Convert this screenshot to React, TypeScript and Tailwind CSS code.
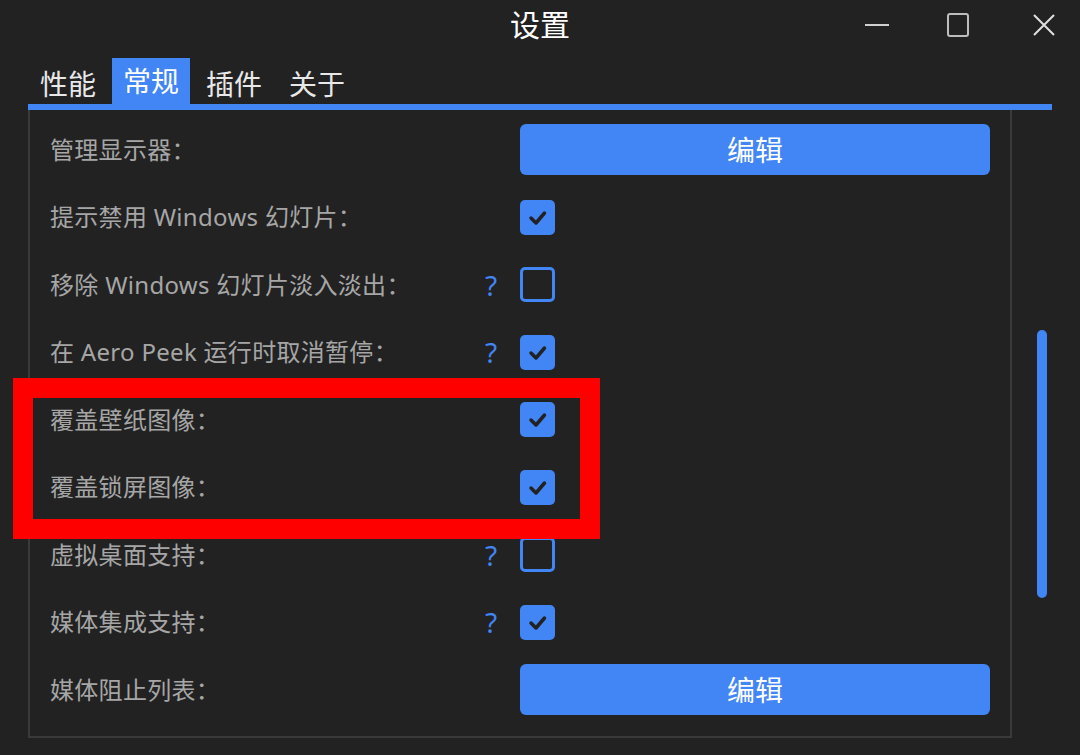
import React from "react";

type Row = {
  label: string;
  kind: "button" | "check";
  checked?: boolean;
  help?: boolean;
};

const rows: Row[] = [
  { label: "管理显示器：", kind: "button" },
  { label: "提示禁用 Windows 幻灯片：", kind: "check", checked: true },
  { label: "移除 Windows 幻灯片淡入淡出：", kind: "check", checked: false, help: true },
  { label: "在 Aero Peek 运行时取消暂停：", kind: "check", checked: true, help: true },
  { label: "覆盖壁纸图像：", kind: "check", checked: true },
  { label: "覆盖锁屏图像：", kind: "check", checked: true },
  { label: "虚拟桌面支持：", kind: "check", checked: false, help: true },
  { label: "媒体集成支持：", kind: "check", checked: true, help: true },
  { label: "媒体阻止列表：", kind: "button" },
];

const tabs = ["性能", "常规", "插件", "关于"];

const font = {
  fontFamily: '"Noto Sans", "Noto Sans CJK SC", sans-serif',
};

const Checkbox = ({ checked }: { checked?: boolean }) =>
  checked ? (
    <div className="w-[35px] h-[35px] rounded-[5px] bg-[#4285f4] flex items-center justify-center">
      <svg width="35" height="35" viewBox="0 0 35 35">
        <path
          d="M11 18 L16 23 L24.5 13"
          fill="none"
          stroke="#222222"
          strokeWidth="3.5"
          strokeLinecap="round"
          strokeLinejoin="round"
        />
      </svg>
    </div>
  ) : (
    <div className="w-[35px] h-[35px] rounded-[5px] border-[3px] border-[#4285f4]" />
  );

export default function App() {
  return (
    <div
      className="relative w-[1080px] h-[755px] bg-[#222222] flex flex-col overflow-hidden"
      style={font}
    >
      {/* title bar */}
      <div className="h-[50px] grid grid-cols-[1fr_auto_1fr] items-center">
        <div />
        <div className="text-[30px] text-white leading-none">设置</div>
        <div className="flex items-center justify-end pr-[25px]">
          <svg width="24" height="24" viewBox="0 0 24 24">
            <line x1="0" y1="12" x2="24" y2="12" stroke="#cfcfcf" strokeWidth="2" />
          </svg>
          <svg className="ml-[58px]" width="22" height="24" viewBox="0 0 22 24">
            <rect x="1" y="1" width="20" height="22" rx="2" fill="none" stroke="#bdbdbd" strokeWidth="2" />
          </svg>
          <svg className="ml-[64px]" width="22" height="24" viewBox="0 0 22 24">
            <path d="M1 2 L21 22 M21 2 L1 22" stroke="#e0e0e0" strokeWidth="2" />
          </svg>
        </div>
      </div>

      {/* tabs */}
      <div className="mt-[8px] ml-[29px] h-[46px] flex gap-[5px]">
        {tabs.map((t) => (
          <div
            key={t}
            className={
              t === "常规"
                ? "px-[11px] bg-[#4285f4] text-white text-[28px] flex items-center"
                : "px-[11px] text-[#e8e8e8] text-[28px] flex items-center pt-[6px]"
            }
          >
            {t}
          </div>
        ))}
      </div>
      <div className="ml-[28px] w-[1024px] h-[6px] bg-[#4285f4]" />

      {/* body */}
      <div className="flex">
        <div className="ml-[28px] w-[984px] h-[628px] border-l-2 border-r-2 border-b-2 border-[#3a3a3a] pt-[6px]">
          {rows.map((r) => (
            <div key={r.label} className="h-[67.5px] flex items-center pl-[20px]">
              <div className="w-[430px] text-[24px] text-[#a6a6a6] whitespace-nowrap tracking-[0.3px]">
                {r.label}
              </div>
              <div className="w-[40px] pl-[5px] text-[28px] text-[#4285f4] leading-none">
                {r.help ? "?" : ""}
              </div>
              {r.kind === "button" ? (
                <div className="w-[470px] h-[51px] rounded-[6px] bg-[#4285f4] flex items-center justify-center text-white text-[28px]">
                  编辑
                </div>
              ) : (
                <Checkbox checked={r.checked} />
              )}
            </div>
          ))}
        </div>
        <div className="ml-[25px] mt-[220px] w-[10px] h-[268px] rounded-full bg-[#4285f4]" />
      </div>

      {/* annotation */}
      <div className="absolute left-[13px] top-[378px] w-[587px] h-[161px] border-[20px] border-[#ff0000]" />
    </div>
  );
}
